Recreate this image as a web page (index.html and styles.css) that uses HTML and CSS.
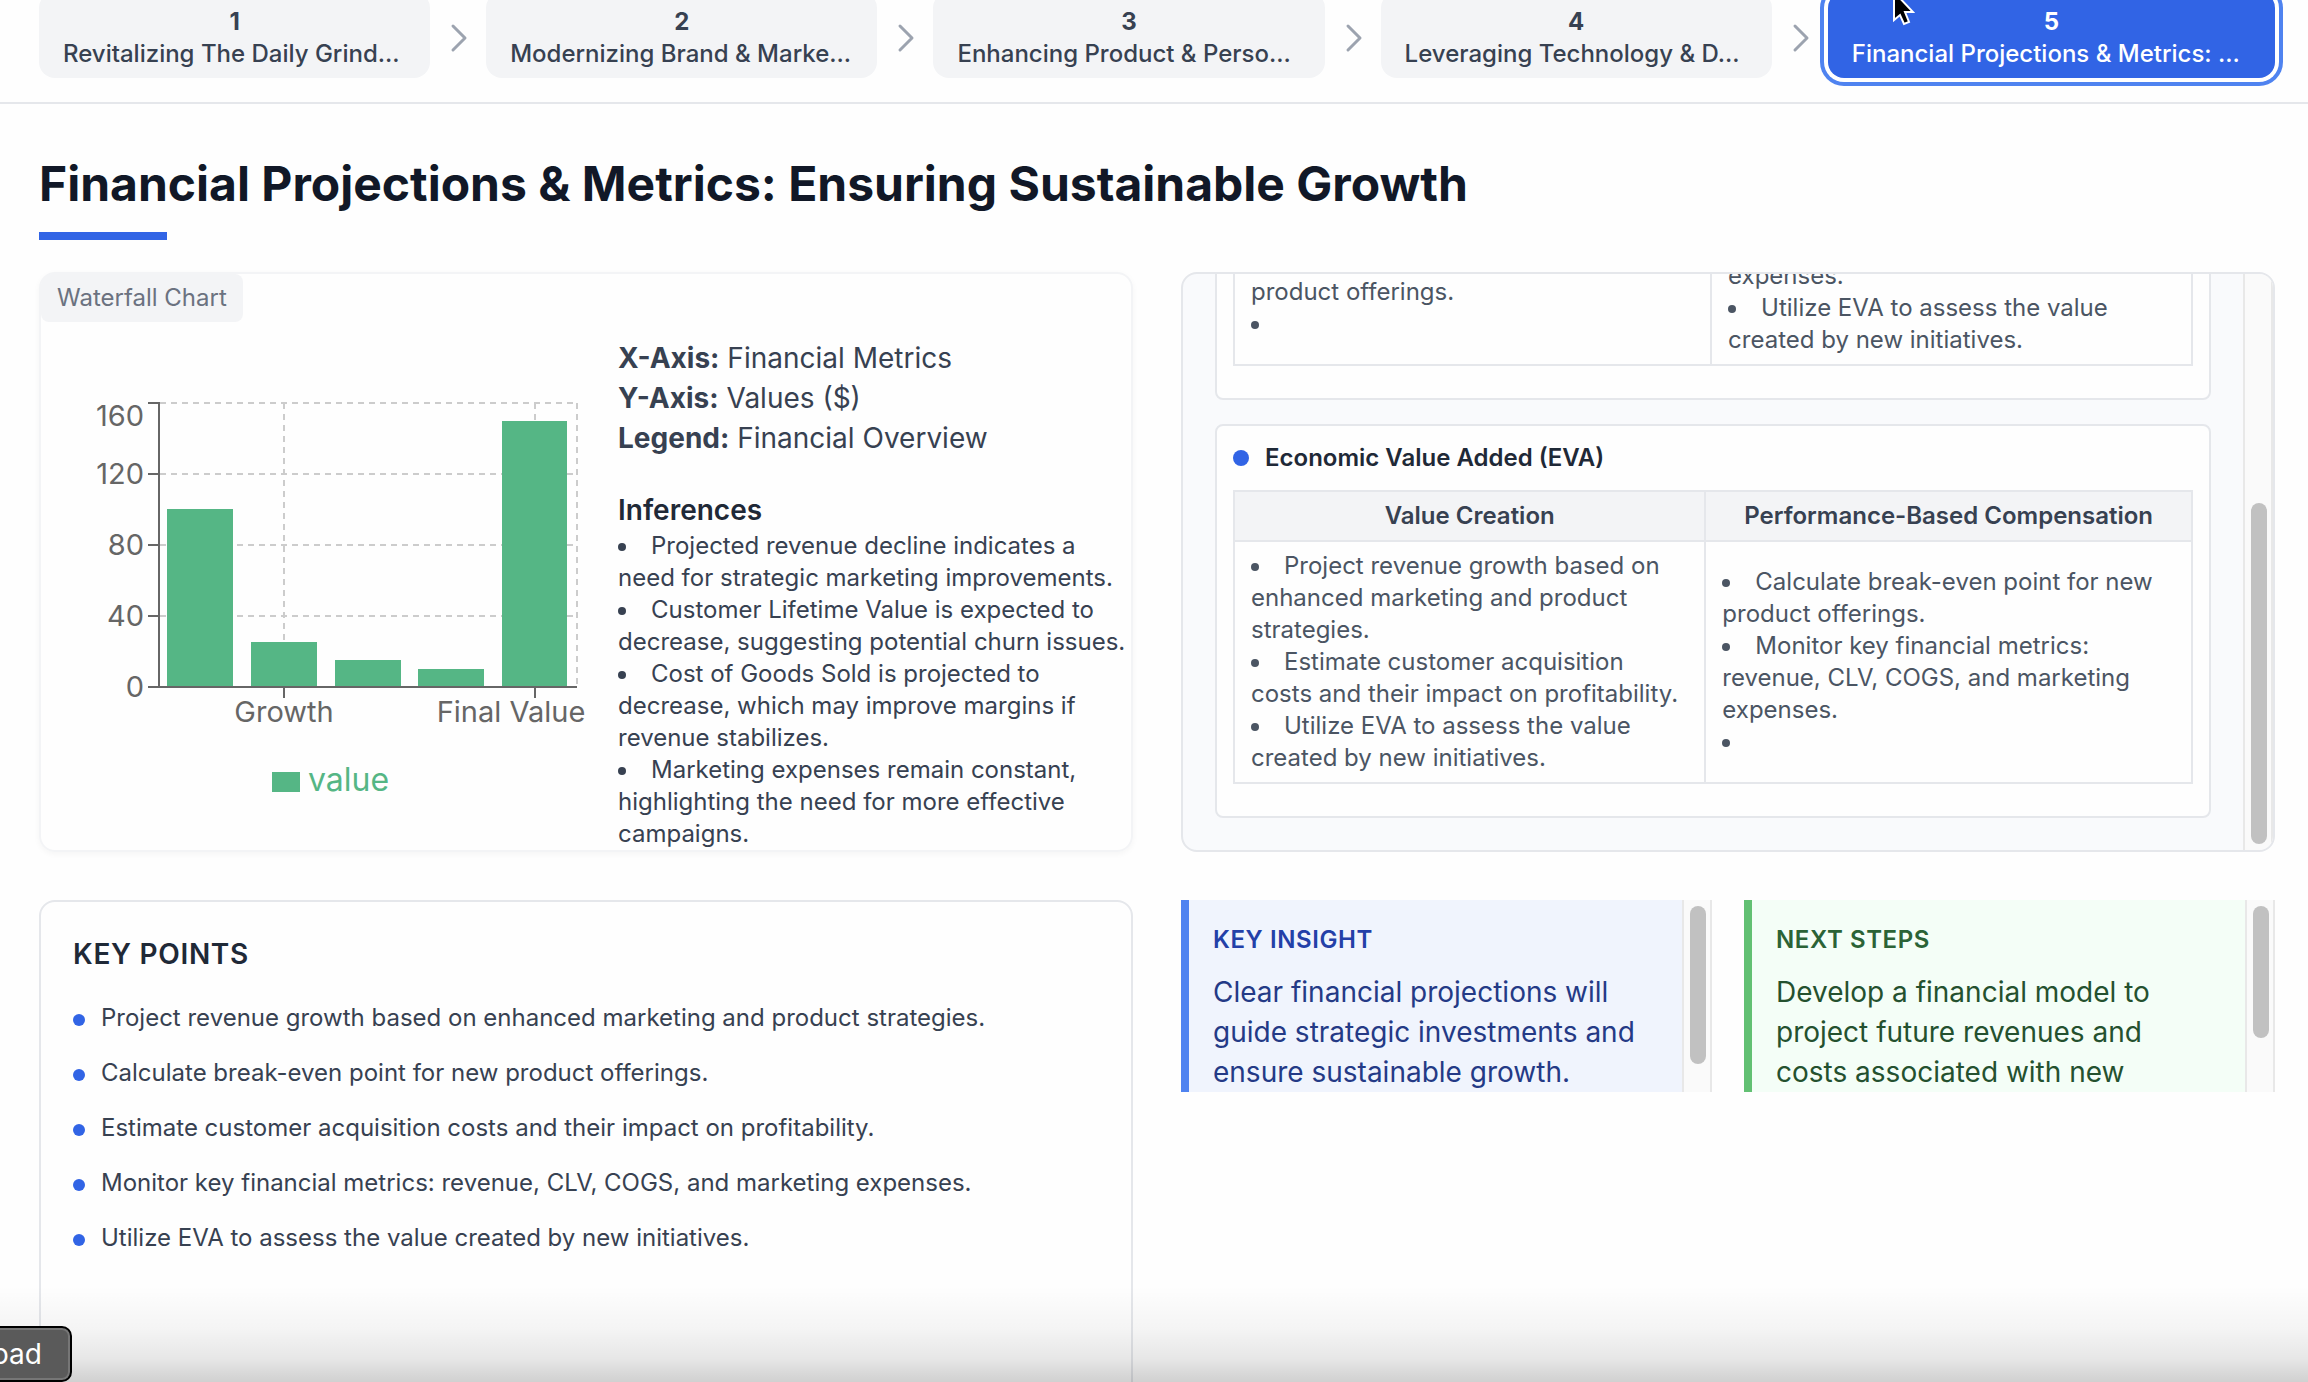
FILE: index.html
```html
<!DOCTYPE html>
<html lang="en">
<head>
<meta charset="utf-8">
<title>Financial Projections &amp; Metrics</title>
<link rel="stylesheet" href="styles.css">
</head>
<body>
<div class="app">
  <nav class="steps" aria-label="Slides">
    <div class="step-item">
      <button class="step" type="button"><span class="step-number">1</span><span class="step-label">Revitalizing The Daily Grind...</span></button>
      <svg class="chevron" viewBox="0 0 24 32" aria-hidden="true"><path d="M7 3l12 12L7 27"/></svg>
    </div>
    <div class="step-item">
      <button class="step" type="button"><span class="step-number">2</span><span class="step-label">Modernizing Brand &amp; Marke...</span></button>
      <svg class="chevron" viewBox="0 0 24 32" aria-hidden="true"><path d="M7 3l12 12L7 27"/></svg>
    </div>
    <div class="step-item">
      <button class="step" type="button"><span class="step-number">3</span><span class="step-label">Enhancing Product &amp; Perso...</span></button>
      <svg class="chevron" viewBox="0 0 24 32" aria-hidden="true"><path d="M7 3l12 12L7 27"/></svg>
    </div>
    <div class="step-item">
      <button class="step" type="button"><span class="step-number">4</span><span class="step-label">Leveraging Technology &amp; D...</span></button>
      <svg class="chevron" viewBox="0 0 24 32" aria-hidden="true"><path d="M7 3l12 12L7 27"/></svg>
    </div>
    <div class="step-item">
      <button class="step step-active" type="button" aria-current="step"><span class="step-number">5</span><span class="step-label">Financial Projections &amp; Metrics: ...</span></button>
    </div>
  </nav>

  <main class="slide">
    <h1 class="slide-title">Financial Projections &amp; Metrics: Ensuring Sustainable Growth</h1>
    <div class="title-rule"></div>

    <div class="panels">
      <section class="card chart-card">
        <div class="chart-side">
          <span class="tag">Waterfall Chart</span>
          <svg class="chart" viewBox="41 322 561 528" role="img" aria-label="Waterfall chart of values">
            <g class="grid-lines">
              <path d="M160 403H577M160 474H577M160 545H577M160 616H577"/>
              <path d="M284 403V686M535 403V686M577 403V686"/>
            </g>
            <g class="bars">
              <rect x="167" y="509" width="66" height="178"/>
              <rect x="251" y="642" width="66" height="45"/>
              <rect x="335" y="660" width="66" height="27"/>
              <rect x="418" y="669" width="66" height="18"/>
              <rect x="502" y="421" width="65" height="266"/>
              <rect x="272" y="772" width="28" height="20"/>
            </g>
            <path class="axis" d="M148 403H160M148 474H160M148 545H160M148 616H160M148 687H577M159 403V687M284 687V698M535 687V698"/>
            <g class="tick-labels tick-y">
              <text x="144" y="426">160</text>
              <text x="144" y="484">120</text>
              <text x="144" y="555">80</text>
              <text x="144" y="626">40</text>
              <text x="144" y="697">0</text>
            </g>
            <g class="tick-labels tick-x">
              <text x="284" y="722">Growth</text>
              <text x="511" y="722">Final Value</text>
            </g>
            <text class="legend-label" x="308" y="791">value</text>
          </svg>
        </div>
        <div class="chart-notes">
          <p><strong>X-Axis:</strong> Financial Metrics</p>
          <p><strong>Y-Axis:</strong> Values ($)</p>
          <p><strong>Legend:</strong> Financial Overview</p>
          <h2 class="notes-heading">Inferences</h2>
          <ul class="bullets">
            <li>Projected revenue decline indicates a need for strategic marketing improvements.</li>
            <li>Customer Lifetime Value is expected to decrease, suggesting potential churn issues.</li>
            <li>Cost of Goods Sold is projected to decrease, which may improve margins if revenue stabilizes.</li>
            <li>Marketing expenses remain constant, highlighting the need for more effective campaigns.</li>
          </ul>
        </div>
      </section>

      <section class="card tables-card">
        <div class="tables-scroll">
          <article class="model">
            <table class="model-table">
              <colgroup><col class="col-even"><col></colgroup>
              <tbody><tr>
                <td><ul class="bullets">
                  <li>Project revenue growth based on enhanced marketing and product strategies.</li>
                  <li>Calculate break-even point for new product offerings.</li>
                  <li></li>
                </ul></td>
                <td><ul class="bullets">
                  <li>Estimate customer acquisition costs and their impact on profitability.</li>
                  <li>Monitor key financial metrics: revenue, CLV, COGS, and marketing expenses.</li>
                  <li>Utilize EVA to assess the value created by new initiatives.</li>
                </ul></td>
              </tr></tbody>
            </table>
          </article>
          <article class="model">
            <h2 class="model-title">Economic Value Added (EVA)</h2>
            <table class="model-table">
              <colgroup><col class="col-narrow"><col></colgroup>
              <thead><tr><th>Value Creation</th><th>Performance-Based Compensation</th></tr></thead>
              <tbody><tr>
                <td><ul class="bullets">
                  <li>Project revenue growth based on enhanced marketing and product strategies.</li>
                  <li>Estimate customer acquisition costs and their impact on profitability.</li>
                  <li>Utilize EVA to assess the value created by new initiatives.</li>
                </ul></td>
                <td><ul class="bullets">
                  <li>Calculate break-even point for new product offerings.</li>
                  <li>Monitor key financial metrics: revenue, CLV, COGS, and marketing expenses.</li>
                  <li></li>
                </ul></td>
              </tr></tbody>
            </table>
          </article>
        </div>
        <div class="track track-end"><div class="thumb thumb-tables"></div></div>
      </section>

      <section class="card points-card">
        <h2 class="points-heading">KEY POINTS</h2>
        <ul class="points">
          <li>Project revenue growth based on enhanced marketing and product strategies.</li>
          <li>Calculate break-even point for new product offerings.</li>
          <li>Estimate customer acquisition costs and their impact on profitability.</li>
          <li>Monitor key financial metrics: revenue, CLV, COGS, and marketing expenses.</li>
          <li>Utilize EVA to assess the value created by new initiatives.</li>
        </ul>
      </section>

      <div class="callouts">
        <section class="callout callout-insight">
          <div class="callout-body">
            <h2>KEY INSIGHT</h2>
            <p>Clear financial projections will guide strategic investments and ensure sustainable growth.</p>
          </div>
          <div class="track"><div class="thumb thumb-insight"></div></div>
        </section>
        <section class="callout callout-next">
          <div class="callout-body">
            <h2>NEXT STEPS</h2>
            <p>Develop a financial model to project future revenues and costs associated with new</p>
          </div>
          <div class="track"><div class="thumb thumb-next"></div></div>
        </section>
      </div>
    </div>
  </main>

  <div class="fade"></div>
  <div class="status">Download</div>
  <svg class="cursor" viewBox="0 0 24 36" aria-hidden="true"><path d="M3 -8V20L9 15L13 24L18 22L14 12H22Z"/></svg>
</div>
</body>
</html>
```
FILE: styles.css
```css
* { box-sizing: border-box; margin: 0; padding: 0; }

body {
  font-family: Inter, "Liberation Sans", sans-serif;
  font-size: 24px;
  line-height: 32px;
  color: #374151;
  background: #fefefe;
}

ul { list-style: none; }

.app { position: relative; height: 100vh; overflow: hidden; }

/* Slide navigation */
.steps {
  display: flex;
  padding: 0 33px 24px 39px;
  border-bottom: 2px solid #e5e7eb;
}
.step-item { flex: 1 1 0; min-width: 0; display: flex; align-items: center; }
.step {
  flex: 1;
  min-width: 0;
  height: 86px;
  margin-top: -8px;
  padding: 0 24px;
  border: 0;
  border-radius: 16px;
  background: #f3f4f6;
  color: #374151;
  font: 500 24px/32px Inter, "Liberation Sans", sans-serif;
  text-align: left;
}
.step span { display: block; white-space: nowrap; }
.step .step-number { padding-top: 6px; font-weight: 700; text-align: center; }
.step-active {
  background: #3164e5;
  color: #fff;
  box-shadow: 0 0 0 4px #fff, 0 0 0 8px #4f83f0;
}
.chevron {
  width: 24px;
  height: 32px;
  margin: 0 16px;
  fill: none;
  stroke: #9ca3af;
  stroke-width: 3;
  stroke-linecap: round;
  stroke-linejoin: round;
}

/* Slide */
.slide { padding: 48px 33px 0 39px; }
.slide-title { font-size: 48px; line-height: 64px; font-weight: 700; color: #111827; }
.title-rule { width: 128px; height: 8px; margin: 16px 0 32px; background: #3164e5; }

.panels {
  display: grid;
  grid-template-columns: 1fr 1fr;
  grid-template-rows: 580px minmax(560px, auto);
  gap: 48px;
}
.card { border: 2px solid #e5e7eb; border-radius: 16px; }
.bullets { list-style: disc inside; }

/* Chart */
.chart-card {
  display: grid;
  grid-template-columns: 561fr 529fr;
  border-color: #f3f4f6;
  box-shadow: 0 2px 6px rgba(0, 0, 0, 0.04);
}
.chart-side { display: flex; flex-direction: column; align-items: flex-start; }
.tag {
  padding: 8px 16px;
  border-radius: 12px 8px 8px 8px;
  background: #f3f4f6;
  color: #6b7280;
}
.chart { display: block; width: 100%; }
.grid-lines { fill: none; stroke: #ccc; stroke-width: 2; stroke-dasharray: 6 5; }
.bars { fill: #55b685; }
.axis { fill: none; stroke: #666; stroke-width: 2; }
.tick-labels { font-size: 29px; fill: #666; }
.tick-y { text-anchor: end; }
.tick-x { text-anchor: middle; }
.legend-label { font-size: 32px; fill: #55b685; }
.chart-notes { padding: 64px 0 0 16px; }
.chart-notes p { font-size: 28px; line-height: 40px; }
.notes-heading {
  margin-top: 32px;
  font-size: 28px;
  line-height: 40px;
  font-weight: 600;
  color: #1f2937;
}

/* Tables */
.tables-card { display: flex; overflow: hidden; background: #f9fafc; }
.tables-scroll {
  flex: 1;
  min-width: 0;
  display: flex;
  flex-direction: column;
  justify-content: flex-end;
  gap: 24px;
  padding: 32px;
  overflow: hidden;
}
.model {
  flex: none;
  padding: 16px 16px 32px;
  border: 2px solid #e5e7eb;
  border-radius: 8px;
  background: #fefefe;
}
.model-title {
  display: flex;
  align-items: center;
  gap: 16px;
  margin-bottom: 16px;
  font-size: 24px;
  line-height: 32px;
  font-weight: 600;
  color: #1f2937;
}
.model-title::before { content: ""; width: 16px; height: 16px; border-radius: 50%; background: #3164e5; }
.model-table { width: 100%; table-layout: fixed; border-collapse: collapse; color: #4b5563; }
.model-table th, .model-table td { padding: 8px 16px; border: 2px solid #e5e7eb; vertical-align: middle; }
.model-table th { background: #f3f4f6; color: #374151; font-weight: 600; }
.col-even { width: 49.8%; }
.col-narrow { width: 49.2%; }

/* Scroll tracks */
.track {
  flex: none;
  width: 30px;
  padding: 6px;
  border: solid #e8e8e8;
  border-width: 0 2px;
  background: #fafafa;
}
.track-end { display: flex; flex-direction: column; justify-content: flex-end; }
.thumb { width: 16px; border-radius: 8px; background: #c1c1c1; }
.thumb-tables { height: 341px; }
.thumb-insight { height: 158px; }
.thumb-next { height: 132px; }

/* Key points */
.points-card { padding: 32px; }
.points-heading { font-size: 28px; line-height: 40px; font-weight: 600; letter-spacing: 0.025em; color: #1f2937; }
.points { display: grid; gap: 16px; margin-top: 24px; }
.points li { display: flex; align-items: center; gap: 16px; line-height: 39px; }
.points li::before { content: ""; width: 12px; height: 12px; margin-top: 4px; border-radius: 50%; background: #3164e5; }

/* Callouts */
.callouts { display: grid; grid-template-columns: 1fr 1fr; gap: 32px; align-items: start; }
.callout { display: flex; height: 192px; overflow: hidden; border-left: 8px solid; }
.callout-body { flex: 1; padding: 24px; }
.callout h2 { margin-bottom: 16px; font-size: 24px; line-height: 32px; font-weight: 600; letter-spacing: 0.025em; }
.callout p { font-size: 28px; line-height: 40px; }
.callout-insight { border-color: #4f83f0; background: #f0f4fd; color: #243a86; }
.callout-insight h2 { color: #2340a8; }
.callout-next { border-color: #62c073; background: #f4fef7; color: #24512f; }
.callout-next h2 { color: #2b6336; }

/* Overlays */
.fade {
  position: absolute;
  inset: auto 0 0;
  height: 96px;
  background: linear-gradient(rgba(0, 0, 0, 0), rgba(0, 0, 0, 0.04) 45%, rgba(0, 0, 0, 0.09) 75%, rgba(0, 0, 0, 0.18));
}
.status {
  position: absolute;
  right: calc(100% - 72px);
  bottom: 0;
  padding: 10px 28px;
  border: 2px solid #000;
  border-radius: 10px;
  background: #5a5a5a;
  box-shadow: inset 0 0 0 2px #767676;
  color: #fff;
  font-size: 28px;
}
.cursor {
  position: absolute;
  top: 0;
  left: 1891px;
  width: 24px;
  height: 36px;
  fill: #000;
  stroke: #fff;
  stroke-width: 2;
}
```
